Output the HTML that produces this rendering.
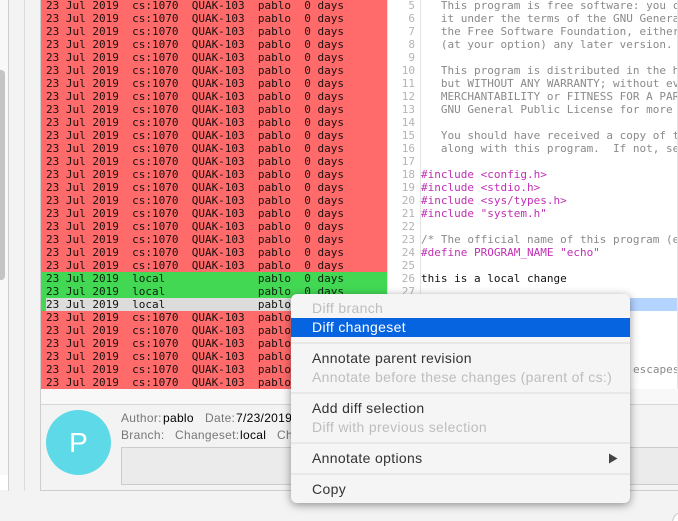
<!DOCTYPE html>
<html><head><meta charset="utf-8">
<style>
html,body{margin:0;padding:0;width:678px;height:521px;overflow:hidden;background:#f3f3f3}
*{box-sizing:border-box}
.a{position:absolute}
#wrap{position:relative;width:678px;height:521px;overflow:hidden;font-family:"Liberation Sans",sans-serif}
#ann{left:41px;top:-1px;width:346px;height:390px;background:#ff6a6a;overflow:hidden}
.m,.m div{font-family:"DejaVu Sans Mono","Liberation Mono",monospace;font-size:11px;line-height:13px;white-space:pre;height:13px}
#ann div{padding-left:5px;color:#1c1010}
#ann .g{background:#43d854;color:#0c200c}
#ann .s{background:#dcdcdc;color:#111;margin-left:5px;padding-left:0}
#ann .sw{background:#43d854;height:13px;padding:0}
#code{left:388px;top:-1px;width:289px;height:390px;background:#fff;overflow:hidden}
#nums{left:0;top:0;width:33px;border-right:1px solid #e4e4e4;height:390px;text-align:right;color:#b4b4b4;padding-right:5px}
#txt{left:33px;top:0;color:#8a8a8a}
#txt .i{color:#c22fb5}
#txt .b{color:#111}
#menu{left:291px;top:294px;width:339px;height:209px;background:#f5f5f5;border-radius:6px;box-shadow:0 2px 9px rgba(0,0,0,.42);font-size:14px;color:#333;letter-spacing:.34px}
#menu div.t{position:absolute;left:21px;line-height:18px;white-space:nowrap}
#menu .d{color:#bdbdbd}
#menu .h{position:absolute;left:0;width:339px;top:24px;height:19px;background:#0764e0}
#menu .l{position:absolute;left:0;width:339px;height:2px;background:#e8e8e8}
.lb{font-size:12px;color:#777;line-height:14px;white-space:nowrap;letter-spacing:.3px}
.lb b{font-weight:normal;color:#000}
</style></head><body><div id="wrap">

<div class="a" style="left:0;top:0;width:8px;height:490px;background:#f8f8f8"></div>
<div class="a" style="left:0;top:475px;width:8px;height:15px;background:#fff"></div>
<div class="a" style="left:8px;top:0;width:1px;height:491px;background:#cfcfcf"></div>
<div class="a" style="left:0;top:70px;width:5px;height:210px;background:#c4c4c4;border-radius:0 4px 4px 0"></div>
<div class="a" style="left:24px;top:0;width:1px;height:491px;background:#dcdcdc"></div>
<div class="a" style="left:40px;top:0;width:1px;height:491px;background:#cdcdcd"></div>

<div class="a m" id="ann" style="height:390px"><div>23 Jul 2019  cs:1070  QUAK-103  pablo  0 days</div><div>23 Jul 2019  cs:1070  QUAK-103  pablo  0 days</div><div>23 Jul 2019  cs:1070  QUAK-103  pablo  0 days</div><div>23 Jul 2019  cs:1070  QUAK-103  pablo  0 days</div><div>23 Jul 2019  cs:1070  QUAK-103  pablo  0 days</div><div>23 Jul 2019  cs:1070  QUAK-103  pablo  0 days</div><div>23 Jul 2019  cs:1070  QUAK-103  pablo  0 days</div><div>23 Jul 2019  cs:1070  QUAK-103  pablo  0 days</div><div>23 Jul 2019  cs:1070  QUAK-103  pablo  0 days</div><div>23 Jul 2019  cs:1070  QUAK-103  pablo  0 days</div><div>23 Jul 2019  cs:1070  QUAK-103  pablo  0 days</div><div>23 Jul 2019  cs:1070  QUAK-103  pablo  0 days</div><div>23 Jul 2019  cs:1070  QUAK-103  pablo  0 days</div><div>23 Jul 2019  cs:1070  QUAK-103  pablo  0 days</div><div>23 Jul 2019  cs:1070  QUAK-103  pablo  0 days</div><div>23 Jul 2019  cs:1070  QUAK-103  pablo  0 days</div><div>23 Jul 2019  cs:1070  QUAK-103  pablo  0 days</div><div>23 Jul 2019  cs:1070  QUAK-103  pablo  0 days</div><div>23 Jul 2019  cs:1070  QUAK-103  pablo  0 days</div><div>23 Jul 2019  cs:1070  QUAK-103  pablo  0 days</div><div>23 Jul 2019  cs:1070  QUAK-103  pablo  0 days</div><div class="g">23 Jul 2019  local              pablo  0 days</div><div class="g">23 Jul 2019  local              pablo  0 days</div><div class="sw"><div class="s">23 Jul 2019  local              pablo  0 days</div></div><div>23 Jul 2019  cs:1070  QUAK-103  pablo  0 days</div><div>23 Jul 2019  cs:1070  QUAK-103  pablo  0 days</div><div>23 Jul 2019  cs:1070  QUAK-103  pablo  0 days</div><div>23 Jul 2019  cs:1070  QUAK-103  pablo  0 days</div><div>23 Jul 2019  cs:1070  QUAK-103  pablo  0 days</div><div>23 Jul 2019  cs:1070  QUAK-103  pablo  0 days</div></div>

<div class="a" style="left:387px;top:0;width:1px;height:389px;background:#e2e2e2"></div>
<div class="a" id="code">
<div class="a" style="left:0;top:299px;width:289px;height:13px;background:#b3d4ff"></div>
<div class="a m" id="nums"><div>5</div><div>6</div><div>7</div><div>8</div><div>9</div><div>10</div><div>11</div><div>12</div><div>13</div><div>14</div><div>15</div><div>16</div><div>17</div><div>18</div><div>19</div><div>20</div><div>21</div><div>22</div><div>23</div><div>24</div><div>25</div><div>26</div><div>27</div></div>
<div class="a m" id="txt"><div>   This program is free software: you can redistribute</div><div>   it under the terms of the GNU General Public License</div><div>   the Free Software Foundation, either version 3</div><div>   (at your option) any later version.</div><div> </div><div>   This program is distributed in the hope that it</div><div>   but WITHOUT ANY WARRANTY; without even the implied</div><div>   MERCHANTABILITY or FITNESS FOR A PARTICULAR PURPOSE</div><div>   GNU General Public License for more details.</div><div> </div><div>   You should have received a copy of the GNU General</div><div>   along with this program.  If not, see the license</div><div> </div><div class="i">#include &lt;config.h&gt;</div><div class="i">#include &lt;stdio.h&gt;</div><div class="i">#include &lt;sys/types.h&gt;</div><div class="i">#include "system.h"</div><div> </div><div>/* The official name of this program (e.g., no 'g'</div><div class="i">#define PROGRAM_NAME "echo"</div><div> </div><div class="b">this is a local change</div></div>
<div class="a m" style="left:245px;top:364px;color:#8a8a8a">escapes</div>
</div>
<div class="a" style="left:677px;top:0;width:1px;height:389px;background:#e4e4e4"></div>

<div class="a" style="left:41px;top:389px;width:637px;height:15px;background:#f8f8f8"></div>
<div class="a" style="left:41px;top:404px;width:637px;height:1px;background:#d6d6d6"></div>
<div class="a" style="left:41px;top:490px;width:637px;height:1px;background:#cdcdcd"></div>

<div class="a" style="left:46px;top:410px;width:65px;height:65px;border-radius:50%;background:#5dd9e8;color:#fff;font-size:28px;line-height:65px;text-align:center">P</div>

<div class="a lb" style="left:121px;top:411px">Author:</div>
<div class="a lb" style="left:163px;top:411px"><b>pablo</b></div>
<div class="a lb" style="left:205px;top:411px">Date:</div>
<div class="a lb" style="left:236px;top:411px"><b>7/23/2019</b></div>
<div class="a lb" style="left:121px;top:428px">Branch:</div>
<div class="a lb" style="left:175px;top:428px">Changeset:</div>
<div class="a lb" style="left:240px;top:428px"><b>local</b></div>
<div class="a lb" style="left:277px;top:428px">Ch</div>
<div class="a" style="left:121px;top:447px;width:570px;height:38px;background:#ebebeb;border:1px solid #ccc"></div>
<div class="a" style="left:672px;top:511px;width:24px;height:24px;border-radius:50%;background:#fff;border:1px solid #c8c8c8"></div>

<div class="a" id="menu">
<div class="h"></div>
<div class="t d" style="top:5px">Diff branch</div>
<div class="t" style="top:24px;color:#fff">Diff changeset</div>
<div class="l" style="top:48px"></div>
<div class="t" style="top:55px">Annotate parent revision</div>
<div class="t d" style="top:74px">Annotate before these changes (parent of cs:)</div>
<div class="l" style="top:98px"></div>
<div class="t" style="top:105px">Add diff selection</div>
<div class="t d" style="top:124px">Diff with previous selection</div>
<div class="l" style="top:148px"></div>
<div class="t" style="top:155px">Annotate options</div>
<svg class="a" style="left:318px;top:159px" width="9" height="11" viewBox="0 0 9 11"><path d="M0 0.5 L8.5 5.5 L0 10.5Z" fill="#444"/></svg>
<div class="l" style="top:179px"></div>
<div class="t" style="top:186px">Copy</div>
</div>

</div></body></html>
